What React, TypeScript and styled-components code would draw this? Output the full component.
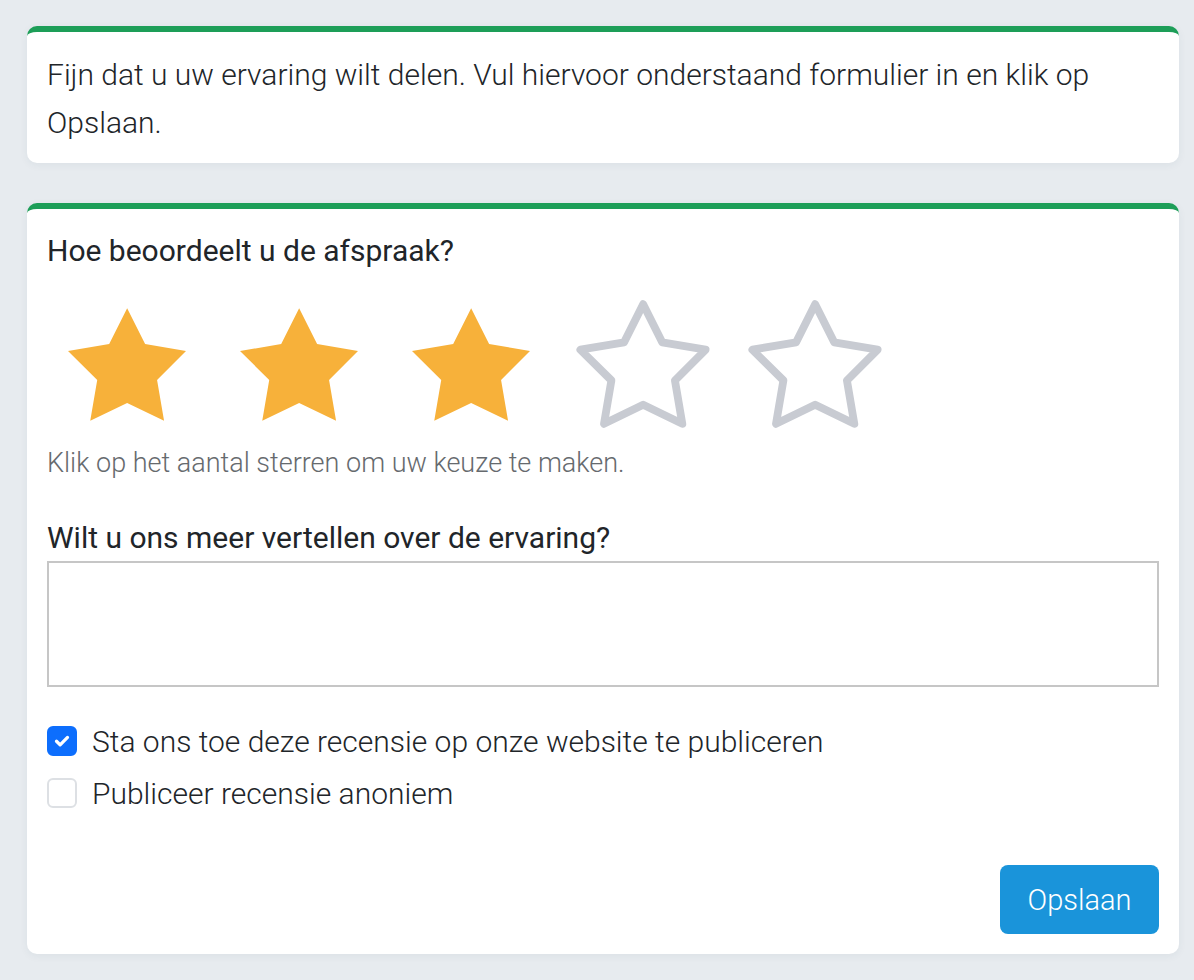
import React, { useState } from "react";
import styled, { createGlobalStyle } from "styled-components";

const GlobalStyle = createGlobalStyle`
  html, body { margin: 0; padding: 0; background: #e7ebef; }
  body { font-family: Roboto, "Noto Sans", "Liberation Sans", sans-serif; color: #212529; }
  * { box-sizing: border-box; }
`;

const Page = styled.div`
  display: flex;
  flex-direction: column;
  gap: 40px;
  padding: 26px 15px 27px 27px;
  min-height: 980px;
`;

const Card = styled.section<{ $pad: string }>`
  background: #ffffff;
  border-top: 6px solid #1d9e58;
  border-radius: 10px;
  box-shadow: 0 2px 8px rgba(40, 60, 80, 0.06);
  padding: ${(p) => p.$pad};
  display: flex;
  flex-direction: column;
`;

const Intro = styled.p`
  margin: 0;
  font-size: 30px;
  line-height: 48px;
  font-weight: 300;
  color: #212529;
`;

const Question = styled.h2<{ $mt?: number }>`
  margin: ${(p) => p.$mt ?? 0}px 0 0;
  font-size: 30px;
  line-height: 40px;
  font-weight: 400;
  color: #212529;
`;

const StarRow = styled.div`
  display: flex;
  gap: 12px;
  margin-top: 26px;
  height: 134px;
`;

const StarSlot = styled.button`
  width: 160px;
  height: 134px;
  display: flex;
  align-items: center;
  justify-content: center;
  padding: 0;
  border: none;
  background: none;
  cursor: pointer;
`;

const Hint = styled.p`
  margin: 12px 0 0;
  font-size: 27px;
  line-height: 40px;
  font-weight: 300;
  color: #666a6e;
`;

const TextArea = styled.textarea`
  margin-top: 3px;
  height: 126px;
  width: 100%;
  border: 2px solid #c6c6c6;
  resize: none;
  font-family: inherit;
  font-size: 28px;
  padding: 8px 12px;
  outline: none;
`;

const Options = styled.div`
  margin-top: 34px;
  display: flex;
  flex-direction: column;
  gap: 12px;
`;

const OptionRow = styled.label`
  display: flex;
  align-items: center;
  gap: 15px;
  height: 40px;
  font-size: 30px;
  font-weight: 300;
  color: #212529;
  cursor: pointer;
`;

const Box = styled.span<{ $on: boolean }>`
  width: 30px;
  height: 30px;
  border-radius: 6px;
  flex: none;
  display: flex;
  align-items: center;
  justify-content: center;
  background: ${(p) => (p.$on ? "#0d6efd" : "#ffffff")};
  border: 2px solid ${(p) => (p.$on ? "#0d6efd" : "#dde0e4")};
`;

const Footer = styled.div`
  display: flex;
  justify-content: flex-end;
  margin-top: 52px;
`;

const SaveButton = styled.button`
  width: 159px;
  height: 69px;
  border: none;
  border-radius: 8px;
  background: #1a94da;
  color: #ffffff;
  font-family: inherit;
  font-size: 29px;
  font-weight: 300;
  cursor: pointer;
`;

const STAR = "59.3,0 77.3,36 118.3,43 89.3,72 96.3,113 59.3,95 22.3,113 29.3,72 0,43 41.3,36";

const FilledStar = () => (
  <svg width="118" height="113" viewBox="0 0 118.3 113">
    <polygon points={STAR} fill="#f7b13a" />
  </svg>
);

const EmptyStar = () => (
  <svg width="140" height="134" viewBox="-6.8 -6.8 131.9 126.6">
    <polygon
      points={STAR}
      fill="none"
      stroke="#c8cbd2"
      strokeWidth="7.4"
      strokeLinejoin="round"
    />
  </svg>
);

const Check = () => (
  <svg width="20" height="20" viewBox="0 0 16 16">
    <path d="M3.6 8.2l2.9 2.9 5.9-6" fill="none" stroke="#fff" strokeWidth="2.6" strokeLinecap="round" strokeLinejoin="round" />
  </svg>
);

export default function App() {
  const [rating, setRating] = useState(3);
  const [publish, setPublish] = useState(true);
  const [anon, setAnon] = useState(false);

  return (
    <>
      <GlobalStyle />
      <Page>
        <Card $pad="19px 20px 16px">
          <Intro>
            Fijn dat u uw ervaring wilt delen. Vul hiervoor onderstaand formulier in en klik op Opslaan.
          </Intro>
        </Card>
        <Card $pad="22px 20px 20px">
          <Question>Hoe beoordeelt u de afspraak?</Question>
          <StarRow>
            {[1, 2, 3, 4, 5].map((n) => (
              <StarSlot key={n} onClick={() => setRating(n)} aria-label={`${n} sterren`}>
                {n <= rating ? <FilledStar /> : <EmptyStar />}
              </StarSlot>
            ))}
          </StarRow>
          <Hint>Klik op het aantal sterren om uw keuze te maken.</Hint>
          <Question $mt={35}>Wilt u ons meer vertellen over de ervaring?</Question>
          <TextArea />
          <Options>
            <OptionRow onClick={() => setPublish(!publish)}>
              <Box $on={publish}>{publish && <Check />}</Box>
              Sta ons toe deze recensie op onze website te publiceren
            </OptionRow>
            <OptionRow onClick={() => setAnon(!anon)}>
              <Box $on={anon}>{anon && <Check />}</Box>
              Publiceer recensie anoniem
            </OptionRow>
          </Options>
          <Footer>
            <SaveButton>Opslaan</SaveButton>
          </Footer>
        </Card>
      </Page>
    </>
  );
}
